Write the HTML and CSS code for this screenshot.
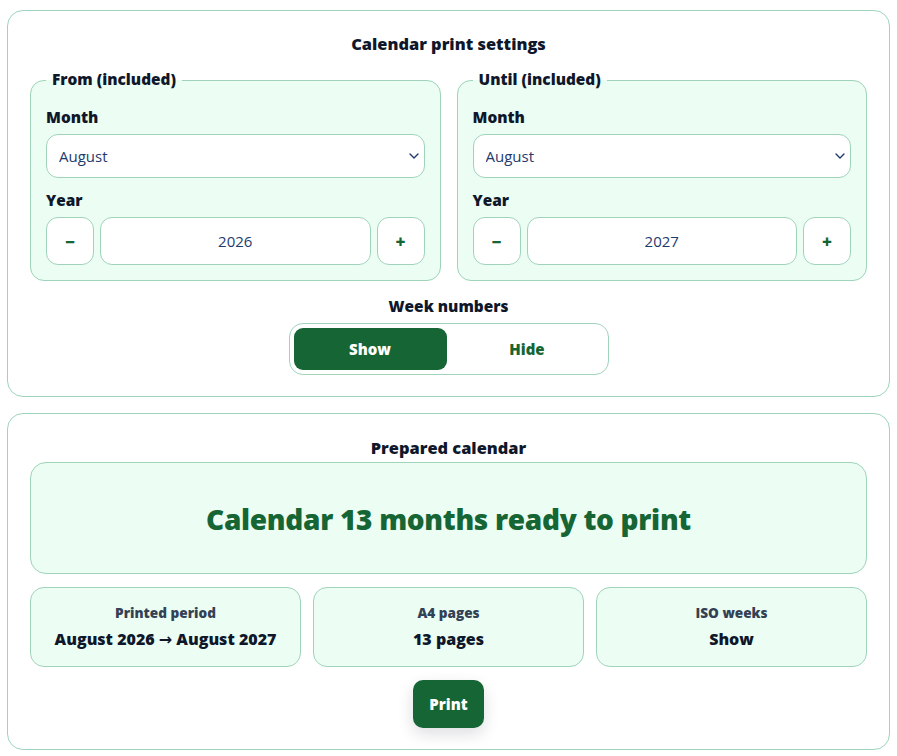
FILE: index.html
```html
<!DOCTYPE html>
<html lang="en">
<head>
<meta charset="utf-8">
<title>Calendar print</title>
<link rel="stylesheet" href="styles.css">
</head>
<body>
<main class="page">
  <section class="card card-settings">
    <h2 class="card-title">Calendar print settings</h2>
    <div class="range-grid">
      <fieldset class="range">
        <legend class="range-legend">From (included)</legend>
        <label class="field-label" for="from-month">Month</label>
        <div class="select-wrap">
          <select id="from-month" class="select">
            <option>August</option>
          </select>
          <svg class="chevron" viewBox="0 0 10 6" width="10" height="6" aria-hidden="true"><path d="M1 1l4 4 4-4" fill="none" stroke="#1e3a6e" stroke-width="1.4" stroke-linecap="round" stroke-linejoin="round"/></svg>
        </div>
        <label class="field-label field-label-year" for="from-year">Year</label>
        <div class="stepper">
          <button class="step" type="button">&minus;</button>
          <input id="from-year" class="year" type="text" value="2026">
          <button class="step" type="button">+</button>
        </div>
      </fieldset>
      <fieldset class="range">
        <legend class="range-legend">Until (included)</legend>
        <label class="field-label" for="to-month">Month</label>
        <div class="select-wrap">
          <select id="to-month" class="select">
            <option>August</option>
          </select>
          <svg class="chevron" viewBox="0 0 10 6" width="10" height="6" aria-hidden="true"><path d="M1 1l4 4 4-4" fill="none" stroke="#1e3a6e" stroke-width="1.4" stroke-linecap="round" stroke-linejoin="round"/></svg>
        </div>
        <label class="field-label field-label-year" for="to-year">Year</label>
        <div class="stepper">
          <button class="step" type="button">&minus;</button>
          <input id="to-year" class="year" type="text" value="2027">
          <button class="step" type="button">+</button>
        </div>
      </fieldset>
    </div>
    <div class="week">
      <div class="week-label">Week numbers</div>
      <div class="toggle">
        <button class="toggle-btn toggle-btn-active" type="button">Show</button>
        <button class="toggle-btn" type="button">Hide</button>
      </div>
    </div>
  </section>

  <section class="card card-result">
    <h2 class="card-title card-title-tight">Prepared calendar</h2>
    <div class="ready">
      <h1 class="ready-title">Calendar 13 months ready to print</h1>
    </div>
    <div class="stats">
      <div class="stat">
        <div class="stat-label">Printed period</div>
        <div class="stat-value">August 2026 &rarr; August 2027</div>
      </div>
      <div class="stat">
        <div class="stat-label">A4 pages</div>
        <div class="stat-value">13 pages</div>
      </div>
      <div class="stat">
        <div class="stat-label">ISO weeks</div>
        <div class="stat-value">Show</div>
      </div>
    </div>
    <div class="actions">
      <button class="print-btn" type="button">Print</button>
    </div>
  </section>
</main>
</body>
</html>
```

FILE: styles.css
```css
* { box-sizing: border-box; }

html, body {
  margin: 0;
  padding: 0;
  background: #ffffff;
}

body {
  font-family: "Open Sans", "Noto Sans", "DejaVu Sans", sans-serif;
  color: #0f172a;
}

.page {
  padding: 10px 7px 0;
  display: flex;
  flex-direction: column;
  gap: 16px;
}

.card {
  border: 1px solid #9fd4bb;
  border-radius: 16px;
  background: #ffffff;
  padding: 22px 22px 21px;
}

.card-result {
  padding-top: 23px;
  padding-bottom: 21px;
}

.card-title {
  margin: 0 0 14px;
  font-size: 16.4px;
  line-height: 22px;
  font-weight: 800;
  text-align: center;
  color: #0f172a;
}

.card-title-tight {
  margin-bottom: 3px;
}

.range-grid {
  display: grid;
  grid-template-columns: 1fr 1fr;
  gap: 16px;
}

.range {
  margin: 0;
  min-width: 0;
  padding: 16px 15px 15px;
  border: 1px solid #9fd4bb;
  border-radius: 14px;
  background: #ecfdf3;
}

.range-legend {
  padding: 0 6px;
  font-size: 15.4px;
  line-height: 22px;
  font-weight: 800;
  color: #0f172a;
}

.field-label {
  display: block;
  font-size: 15.4px;
  line-height: 22px;
  font-weight: 800;
  color: #0f172a;
  margin-bottom: 5px;
}

.field-label-year {
  margin-top: 12px;
  margin-bottom: 5px;
}

.select-wrap {
  position: relative;
}

.select {
  display: block;
  width: 100%;
  height: 44px;
  margin: 0;
  padding: 0 30px 0 12px;
  border: 1px solid #9fd4bb;
  border-radius: 12px;
  background: #ffffff;
  font-family: inherit;
  font-size: 15px;
  color: #1e3a6e;
  -webkit-appearance: none;
  appearance: none;
  outline: none;
}

.chevron {
  position: absolute;
  right: 6px;
  top: 19px;
  width: 10px;
  height: 6px;
  pointer-events: none;
}

.stepper {
  display: grid;
  grid-template-columns: 48px 1fr 48px;
  gap: 6px;
}

.step {
  height: 48px;
  margin: 0;
  padding: 0;
  border: 1px solid #9fd4bb;
  border-radius: 12px;
  background: #ffffff;
  color: #166534;
  font-family: inherit;
  font-size: 17px;
  font-weight: 800;
  cursor: pointer;
}

.year {
  width: 100%;
  min-width: 0;
  height: 48px;
  margin: 0;
  padding: 0 8px;
  border: 1px solid #9fd4bb;
  border-radius: 12px;
  background: #ffffff;
  font-family: inherit;
  font-size: 15px;
  color: #1e3a6e;
  text-align: center;
  outline: none;
}

.week {
  margin-top: 15px;
  display: flex;
  flex-direction: column;
  align-items: center;
}

.week-label {
  font-size: 15.4px;
  line-height: 22px;
  font-weight: 800;
  color: #0f172a;
  margin-bottom: 5px;
}

.toggle {
  width: 320px;
  display: grid;
  grid-template-columns: 1fr 1fr;
  gap: 4px;
  padding: 4px;
  border: 1px solid #9fd4bb;
  border-radius: 14px;
  background: #ffffff;
}

.toggle-btn {
  height: 42px;
  margin: 0;
  border: 0;
  border-radius: 9px;
  background: transparent;
  color: #166534;
  font-family: inherit;
  font-size: 15px;
  font-weight: 800;
  cursor: pointer;
}

.toggle-btn-active {
  background: #166534;
  color: #ffffff;
}

.ready {
  border: 1px solid #9fd4bb;
  border-radius: 16px;
  background: #ecfdf3;
  padding: 38px 16px 36px;
}

.ready-title {
  margin: 0;
  font-size: 28px;
  line-height: 36px;
  font-weight: 800;
  letter-spacing: -0.3px;
  color: #166534;
  text-align: center;
}

.stats {
  margin-top: 13px;
  display: grid;
  grid-template-columns: repeat(3, 1fr);
  gap: 12px;
}

.stat {
  border: 1px solid #9fd4bb;
  border-radius: 14px;
  background: #ecfdf3;
  padding: 16px 10px;
  text-align: center;
}

.stat-label {
  font-size: 13.6px;
  line-height: 18px;
  font-weight: 800;
  color: #334155;
}

.stat-value {
  margin-top: 6px;
  font-size: 16px;
  line-height: 22px;
  font-weight: 800;
  color: #0f172a;
}

.actions {
  margin-top: 13px;
  display: flex;
  justify-content: center;
}

.print-btn {
  height: 48px;
  margin: 0;
  padding: 0 16px;
  border: 0;
  border-radius: 10px;
  background: #166534;
  color: #ffffff;
  font-family: inherit;
  font-size: 15px;
  font-weight: 800;
  box-shadow: 0 6px 16px rgba(15, 23, 42, 0.14);
  cursor: pointer;
}
```
